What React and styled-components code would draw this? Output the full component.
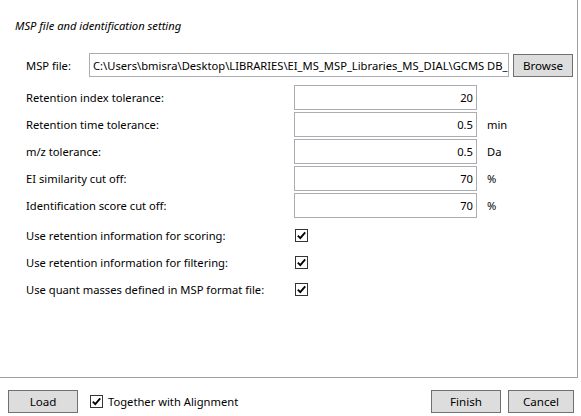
import styled, { createGlobalStyle } from "styled-components";

const GlobalStyle = createGlobalStyle`
  body {
    margin: 0;
    background: #ffffff;
    font-family: "Noto Sans", "Open Sans", sans-serif;
    font-size: 11.2px;
    color: #000000;
  }
`;

const Window = styled.div`
  width: 581px;
  height: 416px;
  display: flex;
  flex-direction: column;
  background: #ffffff;
`;

const Panel = styled.div`
  width: 577px;
  height: 377px;
  border-right: 1px solid #a0a0a0;
  border-bottom: 1px solid #a0a0a0;
  display: flex;
  flex-direction: column;
`;

const Title = styled.div`
  margin: 18px 0 0 15px;
  line-height: 16px;
  font-style: italic;
`;

const FileRow = styled.div`
  display: flex;
  align-items: center;
  margin: 19px 0 0 26px;
  height: 24px;
`;

const FileLabel = styled.span`
  width: 63px;
`;

const TextBox = styled.div`
  box-sizing: border-box;
  height: ${(p) => p.$h || 25}px;
  width: ${(p) => p.$w}px;
  border: 1px solid #abadb3;
  display: flex;
  align-items: center;
  justify-content: ${(p) => (p.$right ? "flex-end" : "flex-start")};
  padding: 0 3px;
  white-space: nowrap;
  overflow: hidden;
`;

const Button = styled.button`
  box-sizing: border-box;
  width: ${(p) => p.$w || 70}px;
  height: 23px;
  background: #dddddd;
  border: 1px solid #707070;
  font: inherit;
  font-size: 11.6px;
  color: #000000;
  padding: 0;
  margin-left: ${(p) => p.$ml || 0}px;
`;

const Grid = styled.div`
  display: grid;
  grid-template-columns: 268px 183px auto;
  grid-auto-rows: 25px;
  row-gap: 2px;
  margin: 8px 0 0 26px;
  align-items: center;
`;

const Unit = styled.span`
  padding-left: 10px;
`;

const CheckGrid = styled(Grid)`
  margin-top: 5px;
`;

const Box = styled.span`
  box-sizing: border-box;
  width: 13px;
  height: 13px;
  border: 1px solid #333333;
  background: #ffffff;
  display: inline-flex;
  align-items: center;
  justify-content: center;
  margin-left: ${(p) => p.$ml || 0}px;
`;

const Footer = styled.div`
  flex: 1;
  display: flex;
  align-items: flex-start;
  padding: 12px 7px 0 8px;
`;

const FooterCheck = styled.label`
  display: flex;
  align-items: center;
  height: 23px;
  gap: 5px;
  margin-left: 12px;
`;

const Spacer = styled.div`
  flex: 1;
`;

function Check({ ml }) {
  return (
    <Box $ml={ml}>
      <svg width="11" height="11" viewBox="0 0 11 11">
        <path d="M1.8 5.6 L4.3 8.2 L9.2 2.4" fill="none" stroke="#000" strokeWidth="1.8" />
      </svg>
    </Box>
  );
}

const fields = [
  { label: "Retention index tolerance:", value: "20", unit: "" },
  { label: "Retention time tolerance:", value: "0.5", unit: "min" },
  { label: "m/z tolerance:", value: "0.5", unit: "Da" },
  { label: "EI similarity cut off:", value: "70", unit: "%" },
  { label: "Identification score cut off:", value: "70", unit: "%" },
];

const checks = [
  "Use retention information for scoring:",
  "Use retention information for filtering:",
  "Use quant masses defined in MSP format file:",
];

export default function App() {
  return (
    <Window>
      <GlobalStyle />
      <Panel>
        <Title>MSP file and identification setting</Title>
        <FileRow>
          <FileLabel>MSP file:</FileLabel>
          <TextBox $w={420} $h={24}>
            C:\Users\bmisra\Desktop\LIBRARIES\EI_MS_MSP_Libraries_MS_DIAL\GCMS DB_
          </TextBox>
          <Button $w={60} $ml={4}>Browse</Button>
        </FileRow>
        <Grid>
          {fields.map((f) => (
            <>
              <span key={f.label}>{f.label}</span>
              <TextBox $w={183} $right>{f.value}</TextBox>
              <Unit>{f.unit}</Unit>
            </>
          ))}
        </Grid>
        <CheckGrid>
          {checks.map((c) => (
            <>
              <span key={c}>{c}</span>
              <Check ml={1} />
              <span />
            </>
          ))}
        </CheckGrid>
      </Panel>
      <Footer>
        <Button>Load</Button>
        <FooterCheck>
          <Check />
          Together with Alignment
        </FooterCheck>
        <Spacer />
        <Button>Finish</Button>
        <Button $ml={7} $w={66}>Cancel</Button>
      </Footer>
    </Window>
  );
}
